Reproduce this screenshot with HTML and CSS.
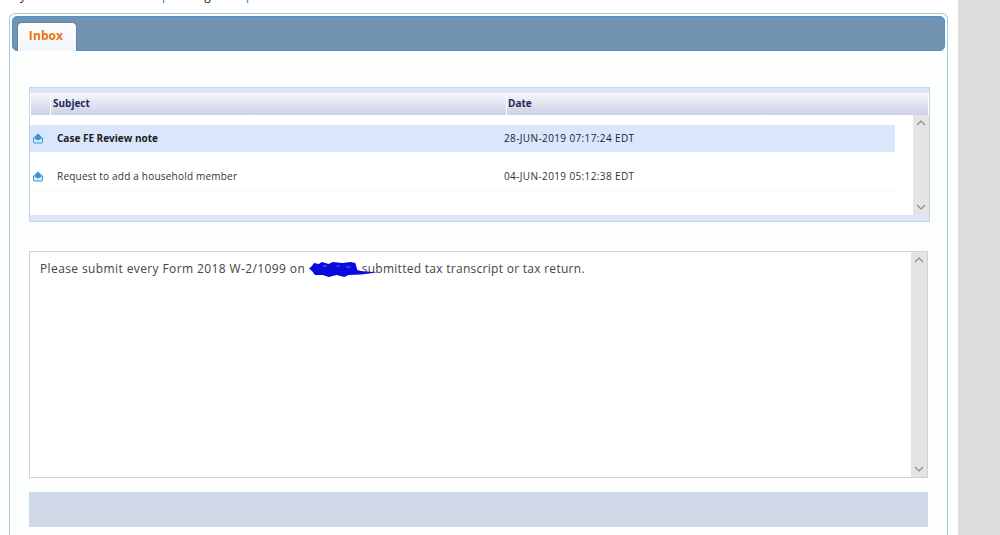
FILE: index.html
```html
<!DOCTYPE html>
<html lang="en">
<head>
<meta charset="utf-8">
<title>Inbox</title>
<link rel="stylesheet" href="styles.css">
</head>
<body>
<div class="page">
  <main class="main">
    <p class="clipped"><span class="c1">y</span><span class="c2">p</span><span class="c3">g</span><span class="c4">p</span></p>
    <section class="panel">
      <div class="tabbar"><div class="tab">Inbox</div></div>
      <div class="content">
        <div class="grid">
          <div class="grid-strip"></div>
          <div class="grid-head">
            <div class="head-gutter"></div>
            <div class="head-subject">Subject</div>
            <div class="head-date">Date</div>
          </div>
          <div class="grid-body">
            <div class="rows">
              <div class="row selected">
                <svg class="icon" viewBox="0 0 12 12"><path class="env" d="M1.500 5.500V10a1 1 0 0 0 1 1h7a1 1 0 0 0 1-1V5.500"/><path class="flap" d="M2.500 4.800 6 1.500 9.500 4.800v2L6 8.500 2.500 6.800z"/></svg>
                <span class="subject">Case FE Review note</span>
                <span class="date">28-JUN-2019 07:17:24 EDT</span>
              </div>
              <div class="row">
                <svg class="icon" viewBox="0 0 12 12"><path class="env" d="M1.500 5.500V10a1 1 0 0 0 1 1h7a1 1 0 0 0 1-1V5.500"/><path class="flap" d="M2.500 4.800 6 1.500 9.500 4.800v2L6 8.500 2.500 6.800z"/></svg>
                <span class="subject">Request to add a household member</span>
                <span class="date">04-JUN-2019 05:12:38 EDT</span>
              </div>
            </div>
            <div class="scrollbar">
              <svg class="arrow" viewBox="0 0 10 6"><path d="M1 5l4-4 4 4"/></svg>
              <svg class="arrow" viewBox="0 0 10 6"><path d="M1 1l4 4 4-4"/></svg>
            </div>
          </div>
          <div class="grid-foot"></div>
        </div>
        <div class="message">
          <div class="message-text">Please submit every Form 2018 W-2/1099 on <span class="redaction"><svg viewBox="0 0 70 16"><path class="ink" d="M0 7.500 3 5 5 2 10 3 13 1 20 3 24 1 34 2 42 1 47 2 49 9 53 10 69 11.500 53 13.500 40 14 36 16 28 14 20 16 14 14 6 14 3 10z"/><path class="speck" d="M14 5h4M28 5h3M38 6h4"/></svg></span><span class="message-tail">submitted tax transcript or tax return.</span></div>
          <div class="scrollbar">
            <svg class="arrow" viewBox="0 0 10 6"><path d="M1 5l4-4 4 4"/></svg>
            <svg class="arrow" viewBox="0 0 10 6"><path d="M1 1l4 4 4-4"/></svg>
          </div>
        </div>
        <div class="bottom-bar"></div>
      </div>
    </section>
  </main>
  <aside class="side"></aside>
</div>
</body>
</html>
```
FILE: styles.css
```css
* { box-sizing: border-box; }
html, body { margin: 0; height: 100%; overflow: hidden; background: #fff; }
body { font-family: "Open Sans", "Liberation Sans", sans-serif; color: #333; }
.page { display: flex; width: 1000px; height: 535px; overflow: hidden; }
.main { width: 958px; flex: none; }
.side { flex: 1; background: #dcdcdc; }
.clipped { margin: -12px 0 0 0; height: 25px; font-size: 12px; line-height: 16px; display: flex; color: #222; }
.c1 { margin-left: 20px; }
.c2 { margin-left: 136px; color: #2a7ab8; }
.c3 { margin-left: 35px; }
.c4 { margin-left: 35px; color: #2a7ab8; }
.panel { width: 939px; margin-left: 9px; height: 540px; border: 1px solid #a9c8de; border-bottom: 0; border-radius: 6px 6px 0 0; padding: 2px 2px 0 2px; background: #fdfefe; }
.tabbar { height: 35px; background: #7294b0; border: 1px solid #4a94d6; border-radius: 5px; padding: 5px 0 0 4px; display: flex; }
.tab { width: 60px; height: 29px; padding-right: 2px; background: linear-gradient(#fdfdfd, #f2f6fa); border: 1px solid #5d86a8; border-bottom: 0; border-radius: 5px 5px 0 0; color: #e8750f; font-size: 12px; font-weight: 700; text-align: center; line-height: 25px; letter-spacing: .1px; }
.content { padding: 36px 0 0 17px; }
.grid { width: 901px; height: 135px; border: 1px solid #c6d3e4; display: flex; flex-direction: column; background: #fff; }
.grid-strip { height: 5px; background: #dae6fb; }
.grid-head { height: 22px; display: flex; background: linear-gradient(#f6f6fb, #cbd2e4); margin-right: 1px; margin-left: 1px; color: #1f2a5c; font-size: 10px; font-weight: 700; line-height: 20px; }
.head-gutter { width: 20px; border-right: 1px solid #fff; }
.head-subject { width: 455px; padding-left: 2px; }
.head-date { padding-left: 1px; border-left: 1px solid #fff; }
.grid-body { flex: 1; display: flex; justify-content: space-between; }
.rows { width: 865px; padding-top: 10px; }
.row { display: flex; align-items: center; height: 27px; padding-bottom: 1px; font-size: 10px; color: #333; margin-bottom: 11px; }
.row:not(.selected) { height: 28px; border-bottom: 1px dotted #f0f0f0; letter-spacing: .21px; }
.row.selected { background: #dae6fb; font-weight: 700; color: #1c1c1c; }
.icon { width: 12px; height: 12px; margin-left: 2px; flex: none; }
.env { fill: #d6eafa; stroke: #3c94d0; stroke-width: 1; }
.flap { fill: #3c94d0; }
.subject { width: 447px; margin-left: 13px; flex: none; }
.row .date { font-weight: 400; letter-spacing: .38px; }
.scrollbar { width: 16px; background: #e4e4e4; display: flex; flex-direction: column; justify-content: space-between; align-items: center; padding: 5px 0; }
.arrow { width: 10px; height: 6px; display: block; }
.arrow path { fill: none; stroke: #8c8c8c; stroke-width: 1.2; }
.grid-foot { height: 6px; background: #dae6fb; }
.message { width: 899px; height: 227px; margin-top: 29px; border: 1px solid #c9d2de; display: flex; justify-content: space-between; background: #fff; }
.message-text { padding: 8px 0 0 10px; font-size: 12px; line-height: 18px; color: #444; letter-spacing: .39px; white-space: nowrap; }
.message-tail { letter-spacing: .28px; }
.redaction { display: inline-block; width: 69px; height: 16px; margin: 0 -16px 0 0; vertical-align: -4px; position: relative; }
.redaction svg { display: block; width: 69px; height: 16px; }
.ink { fill: #0a0ae0; }
.speck { fill: none; stroke: #6a6af0; stroke-width: 1; }
.bottom-bar { width: 899px; height: 35px; margin-top: 14px; background: #ced8e6; }
```
